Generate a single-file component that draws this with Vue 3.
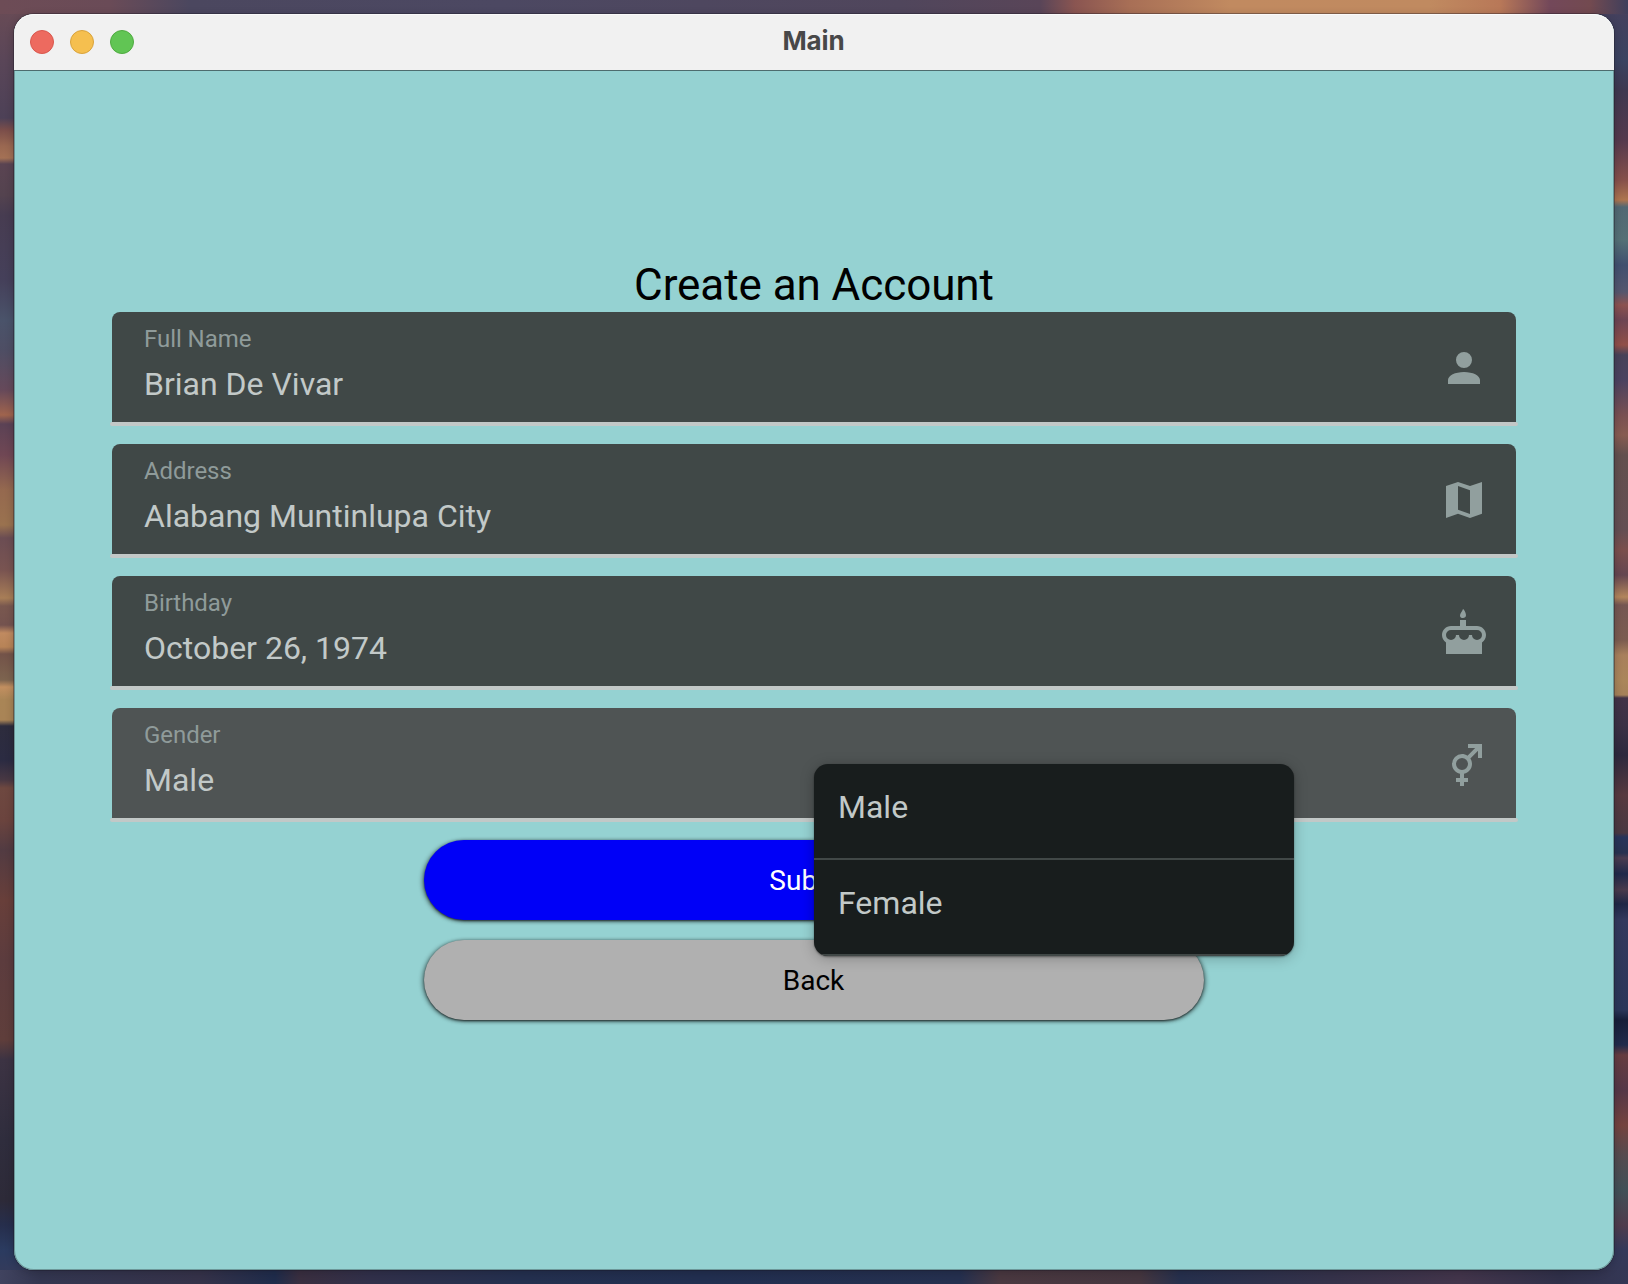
<script setup>
const fields = [
  {
    label: 'Full Name',
    value: 'Brian De Vivar',
    icon: 'M12 4A4 4 0 0 1 16 8A4 4 0 0 1 12 12A4 4 0 0 1 8 8A4 4 0 0 1 12 4M12 14C16.42 14 20 15.79 20 18V20H4V18C4 15.79 7.58 14 12 14Z'
  },
  {
    label: 'Address',
    value: 'Alabang Muntinlupa City',
    icon: 'M3 5L9 3L15 5.05L21 3V18.9L15 21L9 18.9L3 21ZM9 5V16.9L15 18.95V7.1Z'
  },
  {
    label: 'Birthday',
    value: 'October 26, 1974',
    icon: 'M11.5,0.5C12,0.75 13,2.4 13,3.5C13,4.6 12.33,5 11.5,5C10.67,5 10,4.85 10,3.75C10,2.65 11,2 11.5,0.5M18.5,9C21,9 23,11 23,13.5C23,15.06 22.21,16.43 21,17.24V23H3V17.24C1.79,16.43 1,15.06 1,13.5C1,11 3,9 5.5,9H10V6H13V9H18.5M12,16A2.5,2.5 0 0,0 14.5,13.5H16A2.5,2.5 0 0,0 18.5,16A2.5,2.5 0 0,0 21,13.5A2.5,2.5 0 0,0 18.5,11H5.5A2.5,2.5 0 0,0 3,13.5A2.5,2.5 0 0,0 5.5,16A2.5,2.5 0 0,0 8,13.5H9.5A2.5,2.5 0 0,0 12,16Z'
  },
  {
    label: 'Gender',
    value: 'Male',
    focused: true,
    icon: 'M17.58,4H14V2H21V9H19V5.41L15.17,9.24C15.69,10.03 16,11 16,12C16,14.42 14.28,16.44 12,16.9V19H14V21H12V23H10V21H8V19H10V16.9C7.72,16.44 6,14.42 6,12A5,5 0 0,1 11,7C12,7 12.96,7.3 13.75,7.83L17.58,4M11,9A3,3 0 0,0 8,12A3,3 0 0,0 11,15A3,3 0 0,0 14,12A3,3 0 0,0 11,9Z'
  }
]
const options = ['Male', 'Female']
</script>

<template>
  <div class="desktop">
    <div class="window">
      <header class="titlebar">
        <div class="lights">
          <span class="light close"></span>
          <span class="light minimize"></span>
          <span class="light zoom"></span>
        </div>
        <span class="title">Main</span>
      </header>
      <main class="screen">
        <h1 class="heading">Create an Account</h1>
        <div class="form">
          <div v-for="f in fields" :key="f.label" class="field" :class="{ focused: f.focused }">
            <div class="texts">
              <span class="label">{{ f.label }}</span>
              <span class="value">{{ f.value }}</span>
            </div>
            <svg class="icon" viewBox="0 0 24 24"><path :d="f.icon" fill-rule="evenodd" /></svg>
          </div>
        </div>
        <div class="actions">
          <button class="btn submit">Submit</button>
          <button class="btn back">Back</button>
        </div>
        <ul class="menu">
          <li v-for="o in options" :key="o">{{ o }}</li>
        </ul>
      </main>
    </div>
  </div>
</template>

<style>
body {
  margin: 0;
}
</style>

<style scoped>
.desktop {
  box-sizing: border-box;
  width: 1628px;
  height: 1284px;
  padding: 14px;
  overflow: hidden;
  font-family: Roboto, "Liberation Sans", sans-serif;
  background:
    linear-gradient(90deg, #6d4c56 0, #6a4b57 110px, #4b475f 190px, #4c4862 500px, #50465c 900px, #594558 1040px, #8a5551 1075px, #a86f56 1130px, #c18a60 1230px, #c08a60 1430px, #b87858 1500px, #73485a 1550px, #734a50 1590px, #3f3f5c 1628px) 0 0 / 100% 14px no-repeat,
    linear-gradient(90deg, #40435f 0, #333650 40px, #353249 200px, #1f2c4b 275px, #3a2f40 300px, #31304a 370px, #24304f 520px, #222f50 700px, #25304f 960px, #4a3840 1000px, #45363f 1140px, #26304d 1180px, #35324a 1330px, #43354b 1460px, #303049 1560px, #343755 1628px) 0 100% / 100% 14px no-repeat,
    linear-gradient(180deg, #6b4c55 0, #5a4658 60px, #4d4157 118px, #7b4e4a 130px, #9a6851 146px, #a47155 158px, #5a4452 164px, #54434f 195px, #473c51 215px, #45405a 280px, #4a536a 320px, #4e4e64 350px, #66495a 390px, #a0644d 415px, #5b4255 424px, #704754 455px, #95694f 490px, #9a724f 525px, #6b4d53 538px, #795451 570px, #a87e57 598px, #79584f 606px, #74534f 625px, #c08a60 633px, #b78357 647px, #735349 654px, #7d644f 680px, #c28f60 687px, #a98556 700px, #a98456 720px, #2d2c3d 726px, #2b2b42 760px, #493843 780px, #6e4840 788px, #6b443e 820px, #523b42 850px, #683f3a 900px, #5c3c3e 960px, #5f3e3b 1040px, #3c3343 1060px, #2f2d3d 1140px, #2d2a38 1200px, #262e4c 1225px, #2b3b60 1250px, #383b58 1284px) 0 0 / 50% 100% no-repeat,
    linear-gradient(180deg, #8a514e 0, #43405d 15px, #3b4361 60px, #3f3850 90px, #55394d 140px, #86504b 180px, #ae754f 200px, #526873 207px, #557076 240px, #41506f 265px, #55576e 292px, #8c5250 305px, #6d4453 320px, #914f48 345px, #474259 355px, #4b4260 380px, #795052 415px, #875c51 435px, #63504e 455px, #644e53 530px, #7b4f4d 550px, #654651 575px, #b2855c 597px, #755652 605px, #7b5c50 640px, #a8805c 655px, #aa865a 680px, #a58159 695px, #423347 698px, #3c3145 725px, #2e293e 755px, #57393f 795px, #493842 833px, #28345a 837px, #283250 853px, #4a3c50 858px, #20294a 874px, #493a4c 890px, #1f2746 904px, #33395d 920px, #2b3659 1010px, #171e39 1020px, #222b4b 1045px, #663c40 1055px, #553747 1090px, #74433f 1125px, #554b4f 1155px, #425057 1190px, #4f3c4d 1225px, #34395a 1250px, #343753 1284px) 100% 0 / 50% 100% no-repeat;
}

.window {
  display: flex;
  flex-direction: column;
  width: 1600px;
  height: 1256px;
  border-radius: 20px;
  background: #95d2d2;
  box-shadow: 0 0 0 1px rgba(25, 22, 35, 0.35), 0 2px 8px rgba(10, 10, 20, 0.25);
  position: relative;
}

.titlebar {
  box-sizing: border-box;
  display: grid;
  grid-template-columns: 1fr auto 1fr;
  align-items: center;
  height: 56px;
  padding: 0 17px 0 16px;
  border-radius: 20px 20px 0 0;
  background: #f1f1f1;
  box-shadow: inset 0 1px 0 #fafafa;
}

.lights {
  display: flex;
  gap: 16px;
}

.light {
  box-sizing: border-box;
  width: 24px;
  height: 24px;
  border-radius: 50%;
  border: 1px solid;
}

.close {
  background: #ed6a5f;
  border-color: #d9574d;
}

.minimize {
  background: #f5bf4f;
  border-color: #d9a33c;
}

.zoom {
  background: #61c554;
  border-color: #4fab40;
}

.title {
  font: 700 26px/32px Inter, sans-serif;
  letter-spacing: -0.1px;
  color: #484848;
  margin-top: -2px;
}

.screen {
  position: relative;
  box-sizing: border-box;
  display: flex;
  flex-direction: column;
  align-items: center;
  flex: 1;
  padding-top: 189px;
  border-radius: 0 0 20px 20px;
  box-shadow: inset 0 1px 0 #4d6c6e, inset 1px 0 0 #6d9799, inset -1px 0 0 #6d9799, inset 0 -1px 0 #6d9799;
}

.heading {
  margin: 0;
  height: 53px;
  font-size: 44px;
  line-height: 52px;
  font-weight: 400;
  letter-spacing: -0.07px;
  color: #000;
}

.form {
  display: flex;
  flex-direction: column;
  gap: 18px;
  width: 1404px;
}

.field {
  position: relative;
  box-sizing: border-box;
  display: flex;
  justify-content: space-between;
  align-items: flex-start;
  height: 114px;
  padding: 11px 28px 0 32px;
  border-radius: 8px 8px 0 0;
  background: linear-gradient(#404847, #404847) 0 0 / 100% 110px no-repeat;
}

.field.focused {
  background-image: linear-gradient(#4f5454, #4f5454);
}

.field::after {
  content: "";
  position: absolute;
  left: -2px;
  right: -2px;
  bottom: 0;
  height: 4px;
  border-radius: 2px;
  background: #c2c8c7;
}

.texts {
  display: flex;
  flex-direction: column;
}

.label {
  font-size: 24px;
  line-height: 32px;
  letter-spacing: -0.05px;
  color: #8f9b9a;
}

.value {
  margin-top: 9px;
  font-size: 32px;
  line-height: 40px;
  color: #c2c9c8;
}

.icon {
  width: 48px;
  height: 48px;
  margin-top: 21px;
  fill: #919f9e;
}

.actions {
  display: flex;
  flex-direction: column;
  gap: 20px;
  width: 780px;
  margin-top: 18px;
}

.btn {
  height: 80px;
  padding: 1px 1px 0 0;
  border: 0;
  border-radius: 40px;
  font: 400 28px/79px Roboto, sans-serif;
  box-shadow: 0 1px 2px rgba(0, 0, 0, 0.5), -2px 1px 4px rgba(0, 0, 0, 0.4), 2px 1px 4px rgba(0, 0, 0, 0.4);
}

.submit {
  background: #0000f7;
  color: #fff;
}

.back {
  background: #b0b0b0;
  color: #000;
}

.menu {
  position: absolute;
  left: 800px;
  top: 694px;
  width: 480px;
  margin: 0;
  padding: 0;
  list-style: none;
  overflow: hidden;
  border-radius: 14px;
  background: #181d1d;
  box-shadow: 0 1px 2px rgba(0, 0, 0, 0.4), 0 2px 14px rgba(0, 0, 0, 0.25);
}

.menu li {
  box-sizing: border-box;
  height: 96px;
  padding: 23px 24px 0;
  border-bottom: 2px solid #414847;
  font-size: 32px;
  line-height: 40px;
  color: #c2c9c8;
}
</style>
